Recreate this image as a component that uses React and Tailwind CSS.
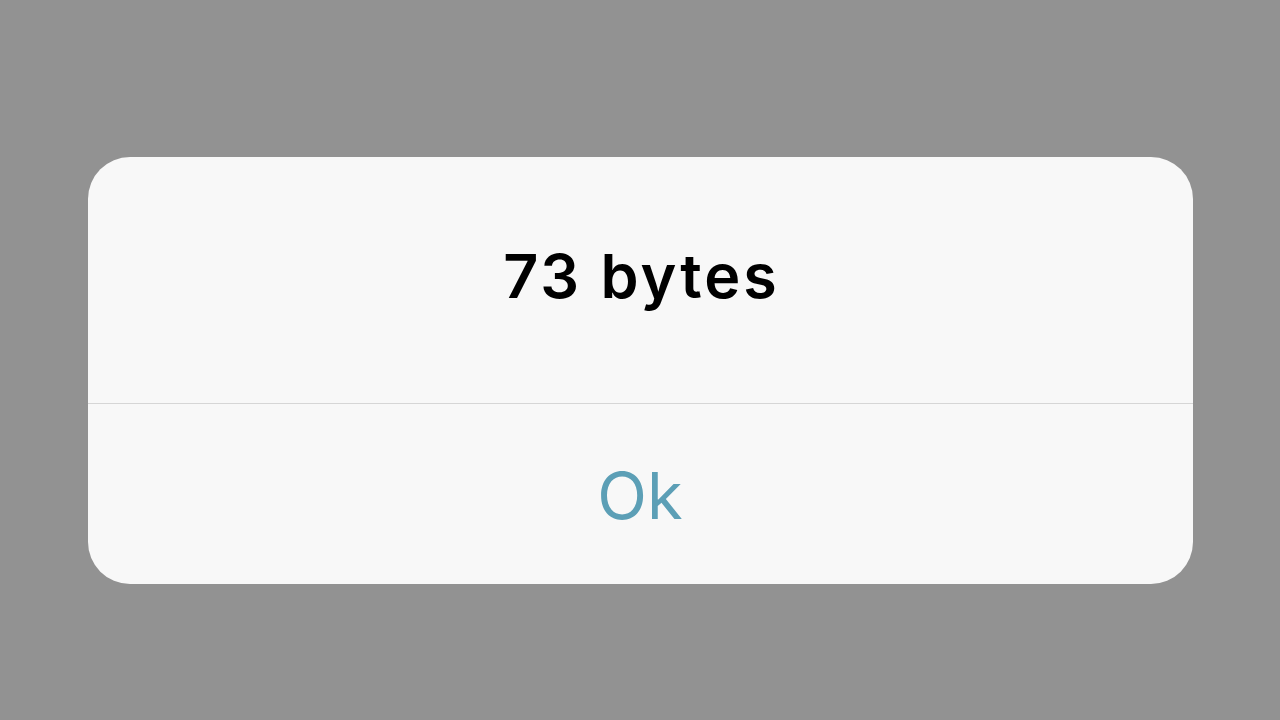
export default function App() {
  return (
    <div className="w-[1280px] h-[720px] bg-[#929292] flex flex-col items-center pt-[157px]" style={{ fontFamily: 'Inter, "Liberation Sans", sans-serif' }}>
      <div className="w-[1105px] bg-[#f8f8f8] rounded-[42px] flex flex-col overflow-hidden">
        <div className="h-[246px] flex items-center justify-center pb-[8px]">
          <h1 className="text-[61px] font-semibold text-black leading-none tracking-[3px] pl-[3px]">73 bytes</h1>
        </div>
        <div className="h-px bg-[#d6d6d6]" />
        <button className="h-[180px] flex items-center justify-center text-[65px] text-[#5c9fb6] leading-none pt-[2px]">
          Ok
        </button>
      </div>
    </div>
  );
}
